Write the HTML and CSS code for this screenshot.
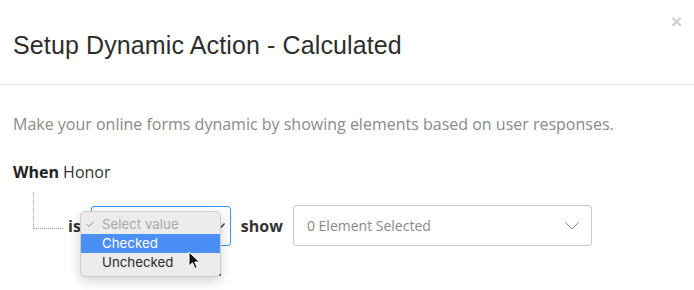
FILE: index.html
```html
<!DOCTYPE html>
<html lang="en">
<head>
    <meta charset="UTF-8">
    <meta name="viewport" content="width=device-width, initial-scale=1.0">
    <title>Setup Dynamic Action</title>
    <link rel="stylesheet" href="styles.css">
</head>
<body>

    <div class="modal">
        <div class="modal-header">
            <h2 class="modal-title">Setup Dynamic Action - Calculated</h2>
            <span class="close">&times;</span>
        </div>

        <div class="modal-body">
            <p class="intro">Make your online forms dynamic by showing elements based on user responses.</p>

            <div class="when"><b>When</b> Honor</div>

            <div class="condition">
                <div class="connector"></div>
                <div class="fields">
                    <span class="keyword">is</span>
                    <div class="value-select">
                        <svg class="mini-chevron" width="7" height="5" viewBox="0 0 7 5"><path d="M0.5 0.5 L3.5 4 L6.5 0.5" fill="none" stroke="#333" stroke-width="1.2"/></svg>
                        <span class="hidden-mark"></span>
                        <span class="hidden-mark right"></span>
                    </div>
                    <span class="keyword show">show</span>
                    <div class="element-select">
                        <span>0 Element Selected</span>
                        <svg width="14" height="8" viewBox="0 0 14 8"><path d="M0.5 0.5 L7 7 L13.5 0.5" fill="none" stroke="#8a8a8a" stroke-width="1"/></svg>
                    </div>
                </div>
            </div>
        </div>

        <!-- native select menu, opened -->
        <ul class="menu">
            <li class="disabled"><span class="tick">&#10003;</span>Select value</li>
            <li class="active">Checked</li>
            <li>Unchecked</li>
        </ul>

        <svg class="pointer" width="13" height="19" viewBox="0 0 13 19">
            <path d="M1 1 L1 15 L4.5 11.8 L7 17.5 L9.2 16.5 L6.8 11 L11.5 11 Z" fill="#111" stroke="#fff" stroke-width="1"/>
        </svg>
    </div>

</body>
</html>
```

FILE: styles.css
```css
body {
    margin: 0;
    background: #fff;
    font-family: "Open Sans", Arial, sans-serif;
    overflow: hidden;
}

.modal {
    position: relative;
    width: 694px;
    height: 290px;
}

.modal-header {
    display: flex;
    justify-content: space-between;
    align-items: flex-start;
    height: 84px;
    padding: 0 13px;
    border-bottom: 1px solid #e6e6e6;
}

.modal-title {
    margin: 30px 0 0;
    font-family: "Liberation Sans", Arial, sans-serif;
    font-size: 25px;
    font-weight: normal;
    line-height: 30px;
    letter-spacing: 0.12px;
    color: #2e2e2e;
}

.close {
    margin: 10px -1px 0 0;
    font-family: "Liberation Sans", Arial, sans-serif;
    font-size: 19px;
    font-weight: bold;
    line-height: 24px;
    color: #cfcfcf;
}

.modal-body {
    padding: 27px 13px 0;
}

.intro {
    margin: 0;
    font-size: 16px;
    line-height: 24px;
    color: #8a8a8a;
}

.when {
    margin-top: 24px;
    font-size: 16px;
    line-height: 24px;
    color: #333;
}

.when b {
    color: #222;
}

.condition {
    display: flex;
    margin: 8px 0 0 20px;
}

.connector {
    width: 29px;
    height: 36px;
    border-left: 1px dotted #9a9a9a;
    border-bottom: 1px dotted #9a9a9a;
}

.fields {
    display: flex;
    align-items: center;
    margin-top: 13px;
}

.keyword {
    margin-left: 5px;
    font-size: 16px;
    font-weight: bold;
    color: #333;
}

.keyword.show {
    margin-left: 10px;
}

.value-select {
    position: relative;
    display: flex;
    align-items: center;
    justify-content: flex-end;
    width: 138px;
    height: 38px;
    margin-left: 10px;
    border: 1px solid #3d95f2;
    border-radius: 3px;
}

.mini-chevron {
    margin-right: 5px;
}

.hidden-mark {
    position: absolute;
    left: 7px;
    bottom: -32px;
    width: 5px;
    height: 3px;
    border-radius: 0 0 3px 3px;
    background: #1d3f73;
}

.hidden-mark.right {
    left: auto;
    right: 9px;
    bottom: -31px;
    width: 3px;
    height: 3px;
}

.element-select {
    display: flex;
    align-items: center;
    justify-content: space-between;
    width: 272px;
    height: 39px;
    margin-left: 10px;
    padding: 0 12px 0 13px;
    border: 1px solid #c8c8c8;
    border-radius: 3px;
    font-size: 14px;
    color: #8a8a8a;
}

.menu {
    position: absolute;
    left: 80px;
    top: 211px;
    width: 139px;
    margin: 0;
    padding: 3px 0 4px;
    list-style: none;
    background: #ececec;
    border: 1px solid #cdcdcd;
    border-radius: 5px;
    box-shadow: 0 4px 12px rgba(0, 0, 0, 0.18);
    font-family: Inter, Roboto, sans-serif;
    font-size: 13.3px;
    color: #2a2a2a;
}

.menu li {
    position: relative;
    height: 19px;
    padding-left: 21px;
    line-height: 19px;
}

.menu li.disabled {
    color: #a9a9a9;
}

.menu li.active {
    background: #4b8ff5;
    color: #fff;
}

.tick {
    position: absolute;
    left: 4px;
    font-size: 11px;
    color: #a9a9a9;
}

.pointer {
    position: absolute;
    left: 188px;
    top: 251px;
}
```
